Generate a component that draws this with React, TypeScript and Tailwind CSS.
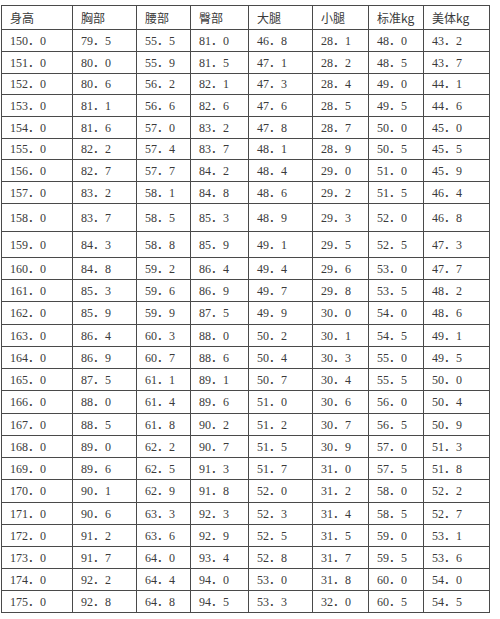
const headers = ["身高", "胸部", "腰部", "臀部", "大腿", "小腿", "标准kg", "美体kg"];

const colWidths = [71, 64, 54, 58, 64, 56, 55, 66];

const rows: number[][] = [
  [150.0, 79.5, 55.5, 81.0, 46.8, 28.1, 48.0, 43.2],
  [151.0, 80.0, 55.9, 81.5, 47.1, 28.2, 48.5, 43.7],
  [152.0, 80.6, 56.2, 82.1, 47.3, 28.4, 49.0, 44.1],
  [153.0, 81.1, 56.6, 82.6, 47.6, 28.5, 49.5, 44.6],
  [154.0, 81.6, 57.0, 83.2, 47.8, 28.7, 50.0, 45.0],
  [155.0, 82.2, 57.4, 83.7, 48.1, 28.9, 50.5, 45.5],
  [156.0, 82.7, 57.7, 84.2, 48.4, 29.0, 51.0, 45.9],
  [157.0, 83.2, 58.1, 84.8, 48.6, 29.2, 51.5, 46.4],
  [158.0, 83.7, 58.5, 85.3, 48.9, 29.3, 52.0, 46.8],
  [159.0, 84.3, 58.8, 85.9, 49.1, 29.5, 52.5, 47.3],
  [160.0, 84.8, 59.2, 86.4, 49.4, 29.6, 53.0, 47.7],
  [161.0, 85.3, 59.6, 86.9, 49.7, 29.8, 53.5, 48.2],
  [162.0, 85.9, 59.9, 87.5, 49.9, 30.0, 54.0, 48.6],
  [163.0, 86.4, 60.3, 88.0, 50.2, 30.1, 54.5, 49.1],
  [164.0, 86.9, 60.7, 88.6, 50.4, 30.3, 55.0, 49.5],
  [165.0, 87.5, 61.1, 89.1, 50.7, 30.4, 55.5, 50.0],
  [166.0, 88.0, 61.4, 89.6, 51.0, 30.6, 56.0, 50.4],
  [167.0, 88.5, 61.8, 90.2, 51.2, 30.7, 56.5, 50.9],
  [168.0, 89.0, 62.2, 90.7, 51.5, 30.9, 57.0, 51.3],
  [169.0, 89.6, 62.5, 91.3, 51.7, 31.0, 57.5, 51.8],
  [170.0, 90.1, 62.9, 91.8, 52.0, 31.2, 58.0, 52.2],
  [171.0, 90.6, 63.3, 92.3, 52.3, 31.4, 58.5, 52.7],
  [172.0, 91.2, 63.6, 92.9, 52.5, 31.5, 59.0, 53.1],
  [173.0, 91.7, 64.0, 93.4, 52.8, 31.7, 59.5, 53.6],
  [174.0, 92.2, 64.4, 94.0, 53.0, 31.8, 60.0, 54.0],
  [175.0, 92.8, 64.8, 94.5, 53.3, 32.0, 60.5, 54.5],
];

// row heights from the original page (158 / 159 are taller)
const rowHeights = [
  "h-[22px]", "h-[22px]", "h-[21px]", "h-[22px]", "h-[22px]", "h-[21px]", "h-[22px]", "h-[22px]",
  "h-[28px]", "h-[26px]",
  "h-[22px]", "h-[22px]", "h-[23px]", "h-[22px]", "h-[22px]", "h-[22px]", "h-[23px]", "h-[22px]",
  "h-[22px]", "h-[22px]", "h-[23px]", "h-[22px]", "h-[22px]", "h-[22px]", "h-[22px]", "h-[22px]",
];

// full-width dot, like the original SimSun table
function fmt(value: number) {
  return value.toFixed(1).replace(".", "．");
}

export default function App() {
  return (
    <div className="h-[619px] w-[500px] bg-white pl-px pt-[5px]">
      <table
        className="table-fixed border-collapse text-[12px] leading-none text-[#3a3a3a]"
        style={{ fontFamily: '"Liberation Serif", "Noto Sans CJK SC", serif' }}
      >
        <colgroup>
          {colWidths.map((w, i) => (
            <col key={i} style={{ width: w }} />
          ))}
        </colgroup>
        <thead>
          <tr className="h-[24px]">
            {headers.map((h) => (
              <th
                key={h}
                className="border border-[#4a4a4a] pl-2 text-left font-normal"
                style={{ fontFamily: '"Noto Sans CJK SC", sans-serif' }}
              >
                {h}
              </th>
            ))}
          </tr>
        </thead>
        <tbody>
          {rows.map((row, r) => (
            <tr key={row[0]} className={rowHeights[r]}>
              {row.map((v, i) => (
                <td key={i} className="border border-[#4a4a4a] pl-2 text-left">
                  {fmt(v)}
                </td>
              ))}
            </tr>
          ))}
        </tbody>
      </table>
    </div>
  );
}
